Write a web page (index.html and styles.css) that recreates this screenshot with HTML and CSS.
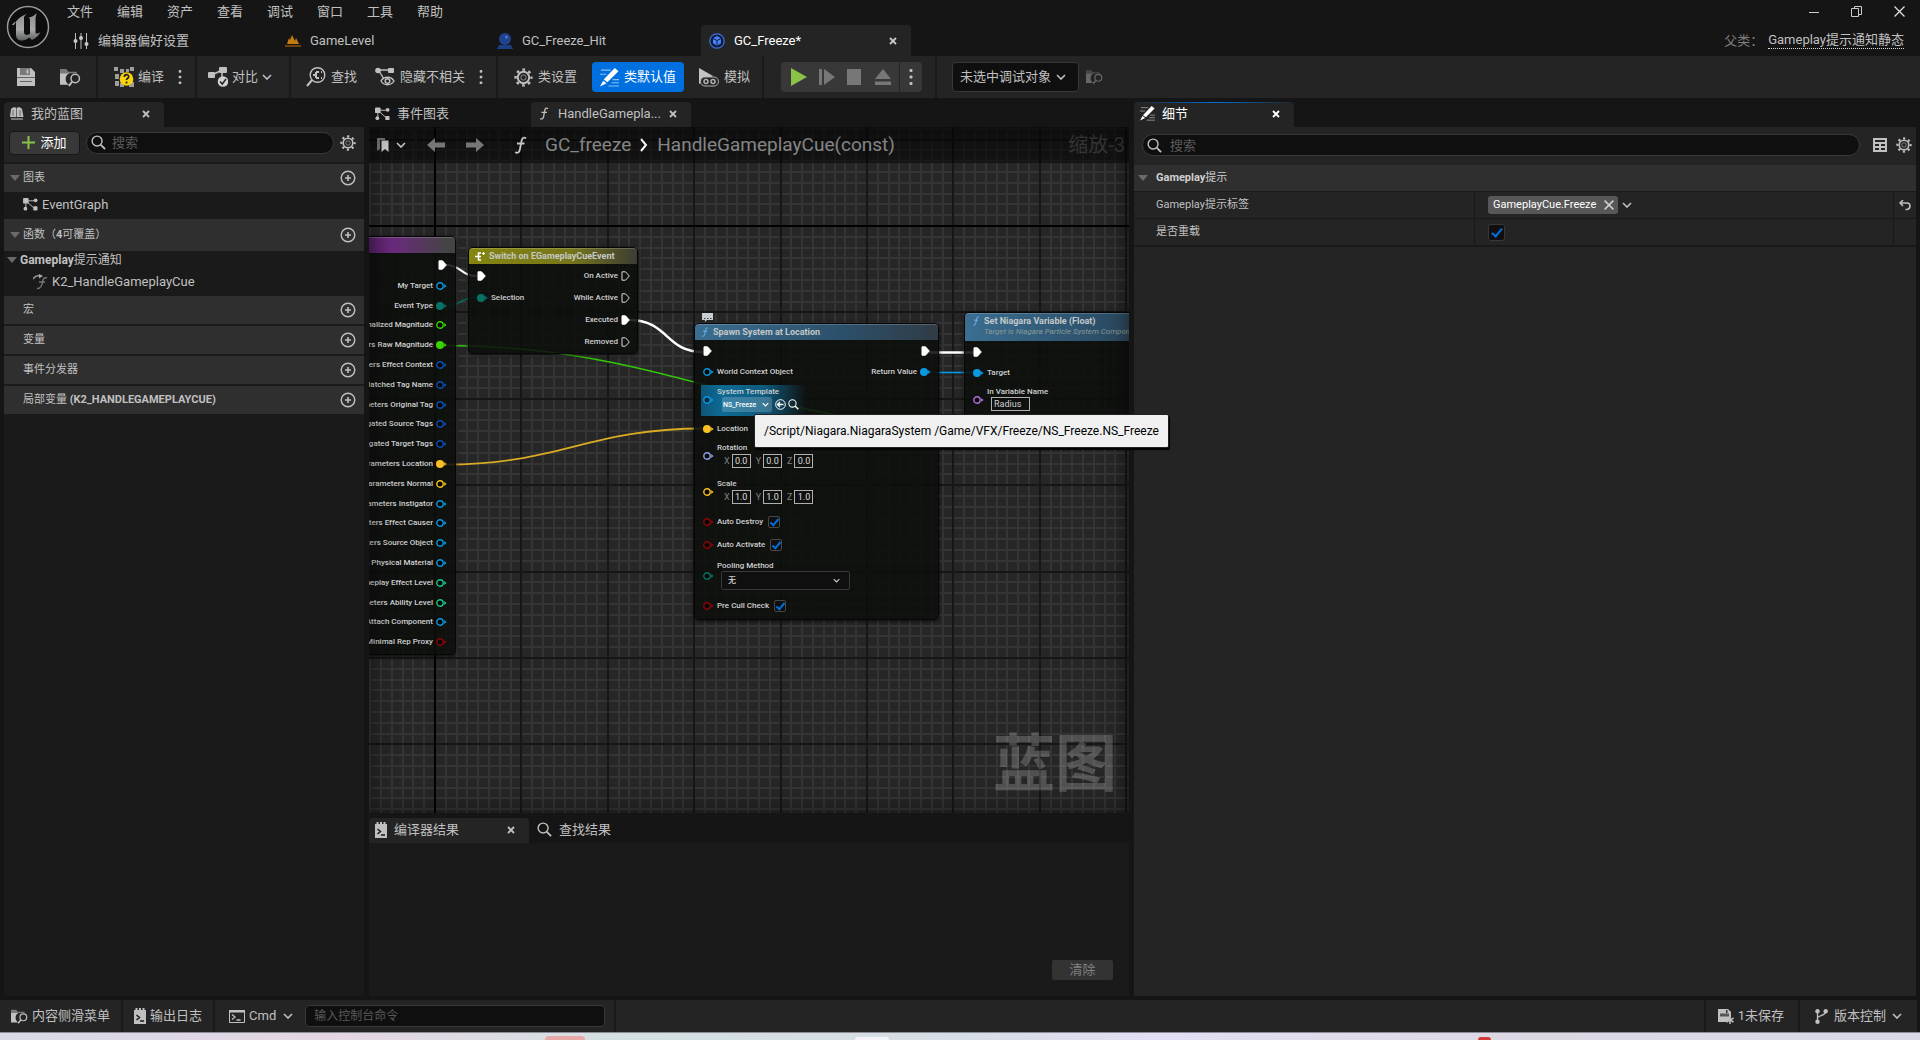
FILE: index.html
```html
<!DOCTYPE html>
<html lang="zh-CN">
<head>
    <meta charset="UTF-8">
    <meta name="viewport" content="width=device-width, initial-scale=1.0">
    <title>GC_Freeze</title>
    <link rel="stylesheet" href="styles.css">
</head>
<body>
    <!-- shared icons -->
    <svg class="defs" aria-hidden="true">
        <defs>
            <linearGradient id="metal" x1="0" y1="0" x2="0" y2="1"><stop offset="0" stop-color="#8f8f8f"/><stop offset=".6" stop-color="#a8a8a8"/><stop offset="1" stop-color="#5c6060"/></linearGradient>
            <symbol id="i-chevron" viewBox="0 0 10 6"><path d="M1 1l4 4 4-4" fill="none" stroke="currentColor" stroke-width="1.6"/></symbol>
            <symbol id="i-close" viewBox="0 0 8 8"><path d="M1 1l6 6M7 1L1 7" stroke="currentColor" stroke-width="1.8"/></symbol>
            <symbol id="i-search" viewBox="0 0 16 16"><circle cx="6.5" cy="6.5" r="5.3" fill="none" stroke="currentColor" stroke-width="1.5"/><path d="M10.5 10.5L15 15" stroke="currentColor" stroke-width="2"/></symbol>
            <symbol id="i-gear" viewBox="0 0 20 20"><g fill="none" stroke="currentColor"><circle cx="10" cy="10" r="6" stroke-width="2"/><circle cx="10" cy="10" r="2.8" stroke-width="1" opacity=".7"/><circle cx="10" cy="10" r="8.3" stroke-width="2.6" stroke-dasharray="2.8 3.72" stroke-dashoffset="1.4"/></g></symbol>
            <symbol id="i-plus" viewBox="0 0 16 16"><circle cx="8" cy="8" r="6.8" fill="none" stroke="currentColor" stroke-width="1.4"/><path d="M8 5v6M5 8h6" stroke="currentColor" stroke-width="1.6"/></symbol>
            <symbol id="i-tri" viewBox="0 0 10 6"><path d="M0 0h10L5 6z" fill="#6a6a6a"/></symbol>
            <symbol id="i-dots" viewBox="0 0 4 16"><g fill="currentColor"><rect x=".5" y="0" width="3" height="3" rx="1"/><rect x=".5" y="6.5" width="3" height="3" rx="1"/><rect x=".5" y="13" width="3" height="3" rx="1"/></g></symbol>
            <symbol id="i-save" viewBox="0 0 18 18"><path d="M0 0h14l4 4v14H0z" fill="currentColor"/><path d="M3 0h10v7H3z" fill="#242424" opacity=".45"/><path d="M9.500 1.500h2v4h-2z" fill="currentColor"/><path d="M0 9h18v1H0zM3 13h12v1H3z" fill="#242424" opacity=".6"/></symbol>
            <symbol id="i-folder" viewBox="0 0 20 18"><path d="M0 1h6l2 2.500h8v1.500H0z" fill="currentColor" opacity=".55"/><path d="M0 5h9a6 6 0 0 0 0 11H0z" fill="currentColor"/><circle cx="14.500" cy="10" r="4" fill="none" stroke="currentColor" stroke-width="1.400"/><path d="M11.500 13L8.500 17" stroke="currentColor" stroke-width="1.800"/></symbol>
            <symbol id="i-graph" viewBox="0 0 16 14"><path d="M3 3h9M3 3v9M4 4l8 7" stroke="currentColor" stroke-width="1"/><rect x="0" y="0" width="6" height="6" rx="1" fill="currentColor"/><circle cx="13.500" cy="2.500" r="2" fill="currentColor"/><rect x="11" y="9" width="4.500" height="4.500" rx="1" fill="currentColor"/><circle cx="2.500" cy="11.500" r="2" fill="currentColor"/></symbol>
            <symbol id="i-pencil" viewBox="0 0 18 18"><path d="M1 2h9M0 6h6M12 11h6M11 14h7M8 17h10" stroke="currentColor" stroke-width="1" opacity=".55"/><path d="M14 0l3.500 3L7 13.500 3.500 11zM3 12l3.200 2.500L0 17.500z" fill="currentColor"/></symbol>
            <symbol id="i-func" viewBox="0 0 12 18"><path d="M11.500 2.500C9.500.500 7.500 2 7 5L5.500 13C5 16 3 18 .8 16M2.500 7.500h7.500" fill="none" stroke="currentColor" stroke-width="1.800"/></symbol>
            <symbol id="i-log" viewBox="0 0 12 16"><path d="M0 2h1.500V0h2v2h1.500V0h2v2h1.500V0h2v2H12v14H0z" fill="currentColor"/><path d="M2.500 7l3 2.500-3 2.500M6 13h4" fill="none" stroke="#1a1a1a" stroke-width="1.500"/></symbol>
            <symbol id="i-back" viewBox="0 0 18 14"><path d="M0 7l8-7v4.500h10v5H8V14z" fill="currentColor"/></symbol>
            <!-- pins -->
            <symbol id="p-exec" viewBox="0 0 9 10"><path d="M1 .800h3.500L8.300 5 4.500 9.200H1z" fill="#fff" stroke="#fff"/></symbol>
            <symbol id="p-exec-o" viewBox="0 0 9 10"><path d="M1 .800h3.500L8.300 5 4.500 9.200H1z" fill="none" stroke="#d8d8d8"/></symbol>
            <symbol id="p-ring" viewBox="0 0 11 8"><circle cx="4" cy="4" r="3.200" fill="#0008" stroke="currentColor" stroke-width="1.400"/><path d="M8.200 2v4L10.600 4z" fill="currentColor"/></symbol>
            <symbol id="p-dot" viewBox="0 0 11 8"><circle cx="4" cy="4" r="4" fill="currentColor"/><path d="M8.200 2v4L10.600 4z" fill="currentColor"/></symbol>
        </defs>
    </svg>

    <header class="titlebar">
        <svg class="logo" viewBox="0 0 44 44"><circle cx="22" cy="22" r="20.500" fill="#0d0d0d" stroke="#9a9a9a" stroke-width="1.500"/><path d="M8 20c3-6 7-9 13-11-3 2-3 3-3 5v13c0 2 1 3 3 3l3-1V15c0-2-1-2-2-2 4-1 7-3 9-5-1 2-1.500 4-1.500 6v13c0 2 2 2 5 0-3 5-6 7-8.500 8l-3-2.500c-2 2-4 3-7 3-4 0-6-2-6-6V18c0-2-2-1-4 2z" fill="url(#metal)"/></svg>
        <div class="title-main">
            <div class="title-row">
                <nav class="menu">
                    <button>文件</button><button>编辑</button><button>资产</button><button>查看</button><button>调试</button><button>窗口</button><button>工具</button><button>帮助</button>
                </nav>
                <div class="win-buttons">
                    <button aria-label="最小化"><svg width="10" height="10"><path d="M0 5.500h10" stroke="#ccc"/></svg></button>
                    <button aria-label="还原"><svg width="11" height="11"><path d="M.5 2.500h7v8h-7zM3.500 2.500v-2h7v8h-3" fill="none" stroke="#ccc"/></svg></button>
                    <button aria-label="关闭"><svg width="11" height="11"><path d="M.5.500l10 10M10.500.500l-10 10" stroke="#ddd" stroke-width="1.300"/></svg></button>
                </div>
            </div>
            <div class="title-row doc-row">
                <div class="doc-tabs">
                    <div class="doc-tab"><svg width="16" height="16" viewBox="0 0 16 16"><g fill="none" stroke="#bdbdbd"><path d="M2.500 0v16M8 0v16M13.500 0v16"/></g><g fill="#c8c8c8"><circle cx="2.500" cy="8" r="2"/><circle cx="8" cy="5" r="2"/><circle cx="13.500" cy="11" r="2"/></g></svg><span>编辑器偏好设置</span></div>
                    <div class="doc-tab"><svg width="16" height="16" viewBox="0 0 16 16"><path d="M0 12h16v2H0z" fill="#6b4410"/><path d="M2 11l2-6 1 2 2-5 3 6 1-3 3 6z" fill="#c57d10"/></svg><span>GameLevel</span></div>
                    <div class="doc-tab"><svg width="16" height="16" viewBox="0 0 16 16"><path d="M2 12h12l2 4H0z" fill="#1e3f86"/><circle cx="8" cy="6" r="6" fill="#21438f"/><circle cx="9.500" cy="4" r="1.500" fill="#4c78d0"/></svg><span>GC_Freeze_Hit</span></div>
                    <div class="doc-tab active"><svg width="16" height="16" viewBox="0 0 16 16"><circle cx="8" cy="8" r="7.200" fill="#0c1c40" stroke="#3f73e0" stroke-width="1.200"/><path d="M8 3l4 2.200v5L8 12.800 4 10.200v-5z" fill="#4a82f5"/><path d="M4 5.500l4 2 4-2M8 7.500v5" stroke="#0c1c40" fill="none"/></svg><span>GC_Freeze*</span><button class="x" aria-label="关闭"><svg width="8" height="8"><use href="#i-close"/></svg></button></div>
                </div>
                <div class="parent-class"><span>父类：</span><a href="#">Gameplay提示通知静态</a></div>
            </div>
        </div>
    </header>

    <div class="toolbar">
        <div class="tool-group g-file">
            <button aria-label="保存"><svg width="18" height="18"><use href="#i-save"/></svg></button>
            <button aria-label="浏览"><svg width="21" height="19"><use href="#i-folder"/></svg></button>
        </div>
        <div class="tool-group g-compile">
            <button><svg width="20" height="20" viewBox="0 0 20 20"><g fill="#bdbdbd"><path d="M0 0h4v4H0zM6 2h4v4H6zM12 2h3v3h-3zM16 0h4v4h-4zM1 7h4v5H1zM1 14h4v5H1zM6 16h4v4H6zM15 15h5v5h-5z" opacity=".8"/></g><circle cx="12.500" cy="12" r="6.800" fill="#f7d40c"/><path d="M10.300 10c0-3 4.400-3 4.400-.3 0 1.600-2.200 1.600-2.200 3.300M12.500 14.500v2" stroke="#222" stroke-width="1.700" fill="none"/></svg><span>编译</span></button>
            <button class="dots" aria-label="编译选项"><svg width="4" height="14"><use href="#i-dots"/></svg></button>
        </div>
        <div class="tool-group g-diff">
            <button><svg width="20" height="20" viewBox="0 0 20 20"><path d="M4 8l8-4M14 5v5" stroke="#c0c0c0" stroke-width="1.500"/><rect y="5" width="7" height="6" rx="1" fill="#c0c0c0"/><rect x="11" y="0" width="8" height="6" rx="1" fill="#c0c0c0"/><circle cx="15" cy="14.500" r="5.300" fill="#d0d0d0"/><path d="M12 14.500l2.300 2.500 3.700-5" stroke="#222" stroke-width="1.500" fill="none"/></svg><span>对比</span><svg width="10" height="6"><use href="#i-chevron"/></svg></button>
        </div>
        <div class="tool-group g-find">
            <button><svg width="20" height="20" viewBox="0 0 20 20"><circle cx="11.500" cy="8" r="7.300" fill="none" stroke="#c0c0c0" stroke-width="1.400"/><path d="M6 13L1 19" stroke="#c0c0c0" stroke-width="2"/><path d="M7 8h3M10 5h3M10 11h3M10 5v6M15 5h1M15 11h1" stroke="#c0c0c0" stroke-width="2"/></svg><span>查找</span></button>
            <button><svg width="20" height="20" viewBox="0 0 20 20"><path d="M3 3h13M4 4l5 8" stroke="#c0c0c0" stroke-width="1.400"/><circle cx="3" cy="3.500" r="2.800" fill="#c0c0c0"/><rect x="13" y="1" width="6" height="5" rx="1" fill="#c0c0c0"/><path d="M6 14c3-5 10-5 13 0-3 5-10 5-13 0z" fill="#242424" stroke="#c0c0c0" stroke-width="1.400"/><circle cx="12.500" cy="14" r="2.300" fill="none" stroke="#c0c0c0" stroke-width="1.500"/></svg><span>隐藏不相关</span></button>
            <button class="dots" aria-label="隐藏选项"><svg width="4" height="14"><use href="#i-dots"/></svg></button>
        </div>
        <div class="tool-group g-class">
            <button><svg width="19" height="19"><use href="#i-gear"/></svg><span>类设置</span></button>
            <button class="primary"><svg width="19" height="19"><use href="#i-pencil"/></svg><span>类默认值</span></button>
            <button><svg width="20" height="20" viewBox="0 0 20 20"><path d="M0 1l14 8L0 17z" fill="#c4c4c4"/><rect x="1.500" y="10" width="18" height="9" rx="4.500" fill="#242424" stroke="#b0b0b0"/><circle cx="7" cy="14.500" r="2" fill="none" stroke="#b0b0b0" stroke-width="1.500"/><circle cx="14" cy="14.500" r="2" fill="none" stroke="#b0b0b0" stroke-width="1.500"/></svg><span>模拟</span></button>
        </div>
        <div class="tool-group g-play">
            <div class="play">
                <button aria-label="播放"><svg width="16" height="18"><path d="M0 0l16 9L0 18z" fill="#8bc34a"/></svg></button>
                <button aria-label="逐帧"><svg width="16" height="16"><path d="M0 0h3v16H0zM5 0l11 8L5 16z" fill="#777"/></svg></button>
                <button aria-label="停止"><svg width="14" height="16"><path d="M0 0h14v16H0z" fill="#777"/></svg></button>
                <button aria-label="弹出"><svg width="16" height="16"><path d="M8 0l8 10H0zM0 12.500h16V16H0z" fill="#777"/></svg></button>
                <button class="more" aria-label="播放选项"><svg width="4" height="16"><use href="#i-dots"/></svg></button>
            </div>
        </div>
        <div class="tool-group g-debug">
            <label class="select-wrap"><select aria-label="调试对象"><option>未选中调试对象</option></select><svg width="10" height="6"><use href="#i-chevron"/></svg></label>
            <button class="dim" aria-label="定位"><svg width="17" height="16"><use href="#i-folder"/></svg></button>
        </div>
    </div>

    <main class="workspace">
        <section class="blueprint">
            <div class="tabs"><div class="tab active"><svg width="14" height="13" viewBox="0 0 14 13"><path d="M1 2c2-2 4-2 5.500-1 1.500-1 4-1 5.500 1l1.500 8H0z" fill="#bdbdbd"/><path d="M6.500 1v9M3 3v6M10 3v6" stroke="#666"/><path d="M1 11h12v2H1z" fill="#777"/></svg><span>我的蓝图</span><button class="x" aria-label="关闭"><svg width="8" height="8"><use href="#i-close"/></svg></button></div></div>
            <div class="panel-tools">
                <button class="add"><svg width="13" height="13"><path d="M6.500 0v13M0 6.500h13" stroke="#8bc34a" stroke-width="2"/></svg>添加</button>
                <label class="search"><svg width="15" height="15"><use href="#i-search"/></svg><input type="text" placeholder="搜索"></label>
                <button class="icon" aria-label="设置"><svg width="16" height="16"><use href="#i-gear"/></svg></button>
            </div>
            <div class="sections">
                <div class="section open"><svg class="tri" width="10" height="6"><use href="#i-tri"/></svg><span>图表</span><button class="icon" aria-label="添加图表"><svg width="16" height="16"><use href="#i-plus"/></svg></button></div>
                <div class="item"><svg width="15" height="13"><use href="#i-graph"/></svg><span>EventGraph</span></div>
                <div class="section open tall"><svg class="tri" width="10" height="6"><use href="#i-tri"/></svg><span>函数（<b>4</b>可覆盖）</span><button class="icon" aria-label="添加函数"><svg width="16" height="16"><use href="#i-plus"/></svg></button></div>
                <div class="sub"><svg width="10" height="6"><use href="#i-tri"/></svg><span><b>Gameplay</b>提示通知</span></div>
                <div class="item func"><svg width="15" height="16" viewBox="0 0 15 16"><path d="M0 5c2-3 4-3.500 7-3.500" fill="none" stroke="#999" stroke-width="1.500"/><path d="M6 0l4 2-4 2.500z" fill="#aaa"/><path d="M14 4c-3-1-4 1-4.500 4S8 15 4 14.500M6 8h6" fill="none" stroke="#777" stroke-width="1.400"/></svg><span>K2_HandleGameplayCue</span></div>
                <div class="section"><span>宏</span><button class="icon" aria-label="添加宏"><svg width="16" height="16"><use href="#i-plus"/></svg></button></div>
                <div class="section"><span>变量</span><button class="icon" aria-label="添加变量"><svg width="16" height="16"><use href="#i-plus"/></svg></button></div>
                <div class="section"><span>事件分发器</span><button class="icon" aria-label="添加分发器"><svg width="16" height="16"><use href="#i-plus"/></svg></button></div>
                <div class="section"><span>局部变量 <b>(K2_HANDLEGAMEPLAYCUE)</b></span><button class="icon" aria-label="添加局部变量"><svg width="16" height="16"><use href="#i-plus"/></svg></button></div>
            </div>
        </section>

        <section class="center">
            <div class="tabs">
                <div class="tab"><svg width="15" height="14"><use href="#i-graph"/></svg><span>事件图表</span></div>
                <div class="tab active"><svg width="14" height="13"><use href="#i-func"/></svg><span>HandleGamepla...</span><button class="x" aria-label="关闭"><svg width="8" height="8"><use href="#i-close"/></svg></button></div>
            </div>
            <div class="graph" id="graph">
                <svg class="layer" id="grid"></svg>
                <div class="watermark">蓝图</div>
                <svg class="layer wires">
                    <path d="M77 138C92 138 92 149 108 149" stroke="#fff" stroke-width="2"/>
                    <path d="M77 179C92 179 92 170 108 170" stroke="#067265" stroke-width="1.500"/>
                    <path d="M77 218.500C190 219 272 241 325 255S430 282 480 290" stroke="#32c80a" stroke-width="1.500"/>
                    <path d="M260 193C300 193 296 225 334 225" stroke="#fff" stroke-width="2.500"/>
                    <path d="M77 337.500C190 337.500 220 301.500 334 301.500" stroke="#d9aa24" stroke-width="1.800"/>
                    <path d="M560 225.500h45" stroke="#fff" stroke-width="2.500"/>
                    <path d="M566 245.500h38" stroke="#00a0f0" stroke-width="1.500"/>
                </svg>

                <div class="node n-event">
                    <div class="node-head purple"></div>
                    <div class="exec-line"><svg width="9" height="10"><use href="#p-exec"/></svg></div>
                    <div class="params">
                        <div class="pin-row blue">My Target<svg class="pin"><use href="#p-ring"/></svg></div>
                        <div class="pin-row teal">Event Type<svg class="pin"><use href="#p-dot"/></svg></div>
                        <div class="pin-row green">Parameters Normalized Magnitude<svg class="pin"><use href="#p-ring"/></svg></div>
                        <div class="pin-row green">Parameters Raw Magnitude<svg class="pin"><use href="#p-dot"/></svg></div>
                        <div class="pin-row navy">Parameters Effect Context<svg class="pin"><use href="#p-ring"/></svg></div>
                        <div class="pin-row navy">Parameters Matched Tag Name<svg class="pin"><use href="#p-ring"/></svg></div>
                        <div class="pin-row navy">Parameters Original Tag<svg class="pin"><use href="#p-ring"/></svg></div>
                        <div class="pin-row navy">Parameters Aggregated Source Tags<svg class="pin"><use href="#p-ring"/></svg></div>
                        <div class="pin-row navy">Parameters Aggregated Target Tags<svg class="pin"><use href="#p-ring"/></svg></div>
                        <div class="pin-row gold">Parameters Location<svg class="pin"><use href="#p-dot"/></svg></div>
                        <div class="pin-row gold">Parameters Normal<svg class="pin"><use href="#p-ring"/></svg></div>
                        <div class="pin-row blue">Parameters Instigator<svg class="pin"><use href="#p-ring"/></svg></div>
                        <div class="pin-row blue">Parameters Effect Causer<svg class="pin"><use href="#p-ring"/></svg></div>
                        <div class="pin-row blue">Parameters Source Object<svg class="pin"><use href="#p-ring"/></svg></div>
                        <div class="pin-row blue">Parameters Physical Material<svg class="pin"><use href="#p-ring"/></svg></div>
                        <div class="pin-row mint">Parameters Gameplay Effect Level<svg class="pin"><use href="#p-ring"/></svg></div>
                        <div class="pin-row mint">Parameters Ability Level<svg class="pin"><use href="#p-ring"/></svg></div>
                        <div class="pin-row blue">Parameters Target Attach Component<svg class="pin"><use href="#p-ring"/></svg></div>
                        <div class="pin-row red">Parameters Minimal Rep Proxy<svg class="pin"><use href="#p-ring"/></svg></div>
                    </div>
                </div>

                <div class="node n-switch">
                    <div class="node-head olive"><svg width="10" height="9" viewBox="0 0 10 9"><path d="M0 4.500h6M6 1H3.500v7H6" fill="none" stroke="#fff" stroke-width="1.500"/><path d="M8.500 0v3M7 1.500h3" stroke="#fff"/></svg>Switch on EGameplayCueEvent</div>
                    <div class="cols">
                        <div class="col">
                            <div class="line"><svg width="9" height="10"><use href="#p-exec"/></svg></div>
                            <div class="line teal"><svg class="pin"><use href="#p-dot"/></svg>Selection</div>
                        </div>
                        <div class="col right">
                            <div class="line">On Active<svg width="9" height="10"><use href="#p-exec-o"/></svg></div>
                            <div class="line">While Active<svg width="9" height="10"><use href="#p-exec-o"/></svg></div>
                            <div class="line">Executed<svg width="9" height="10"><use href="#p-exec"/></svg></div>
                            <div class="line">Removed<svg width="9" height="10"><use href="#p-exec-o"/></svg></div>
                        </div>
                    </div>
                </div>

                <svg class="bubble" viewBox="0 0 11 9"><path d="M0 0h11v7H5L3 9V7H0z" fill="#c9ccd0"/><path d="M2 5.500h1.500M5 5.500h1.500M8 5.500h1.500" stroke="#444"/></svg>
                <div class="node n-spawn">
                    <div class="node-head steel"><svg class="fn" width="8" height="10"><use href="#i-func"/></svg>Spawn System at Location</div>
                    <div class="line split"><svg width="9" height="10"><use href="#p-exec"/></svg><svg width="9" height="10"><use href="#p-exec"/></svg></div>
                    <div class="line blue"><svg class="pin"><use href="#p-ring"/></svg>World Context Object<span class="out">Return Value<svg class="pin"><use href="#p-dot"/></svg></span></div>
                    <div class="template blue">
                        <svg class="pin"><use href="#p-ring"/></svg>
                        <div class="stack">
                            <span>System Template</span>
                            <div class="asset">
                                <button>NS_Freeze<svg width="7" height="5"><use href="#i-chevron"/></svg></button>
                                <svg width="11" height="11" viewBox="0 0 11 11"><circle cx="5.500" cy="5.500" r="4.800" fill="none" stroke="#fff"/><path d="M2.500 5.500h6M5 3L2.500 5.500 5 8" fill="none" stroke="#fff" stroke-width="1.300"/></svg>
                                <svg width="11" height="11"><use href="#i-search"/></svg>
                            </div>
                        </div>
                    </div>
                    <div class="line gold"><svg class="pin"><use href="#p-dot"/></svg>Location</div>
                    <div class="vec lilac"><svg class="pin"><use href="#p-ring"/></svg><div class="stack"><span>Rotation</span><div class="fields"><label>X<input value="0.0"></label><label>Y<input value="0.0"></label><label>Z<input value="0.0"></label></div></div></div>
                    <div class="vec gold"><svg class="pin"><use href="#p-ring"/></svg><div class="stack"><span>Scale</span><div class="fields"><label>X<input value="1.0"></label><label>Y<input value="1.0"></label><label>Z<input value="1.0"></label></div></div></div>
                    <label class="line flag red"><svg class="pin"><use href="#p-ring"/></svg>Auto Destroy<input type="checkbox" class="check" checked></label>
                    <label class="line flag red"><svg class="pin"><use href="#p-ring"/></svg>Auto Activate<input type="checkbox" class="check" checked></label>
                    <div class="vec pooling teal"><svg class="pin"><use href="#p-ring"/></svg><div class="stack"><label for="pool">Pooling Method</label><div class="pool-wrap"><select id="pool"><option>无</option></select><svg width="7" height="5"><use href="#i-chevron"/></svg></div></div></div>
                    <label class="line flag red"><svg class="pin"><use href="#p-ring"/></svg>Pre Cull Check<input type="checkbox" class="check" checked></label>
                </div>

                <div class="node n-set">
                    <div class="node-head steel double"><svg class="fn" width="8" height="10"><use href="#i-func"/></svg><div>Set Niagara Variable (Float)<em>Target is Niagara Particle System Component</em></div></div>
                    <div class="line"><svg width="9" height="10"><use href="#p-exec"/></svg></div>
                    <div class="line blue"><svg class="pin"><use href="#p-dot"/></svg>Target</div>
                    <div class="vec var violet"><svg class="pin"><use href="#p-ring"/></svg><div class="stack"><label for="varname">In Variable Name</label><input id="varname" value="Radius"></div></div>
                </div>

                <div class="crumbs">
                    <button aria-label="书签"><svg width="14" height="14" viewBox="0 0 14 14"><path d="M0 0h8v2H3v9l-3 2z" fill="#777"/><path d="M4.500 2.500h7V14L8 11l-3.500 3z" fill="#ccc"/></svg><svg width="10" height="6"><use href="#i-chevron"/></svg></button>
                    <div class="arrows">
                        <button aria-label="后退"><svg width="18" height="14"><use href="#i-back"/></svg></button>
                        <button class="fwd" aria-label="前进"><svg width="18" height="14"><use href="#i-back"/></svg></button>
                    </div>
                    <svg class="crumb-f" width="15" height="18"><use href="#i-func"/></svg>
                    <span class="crumb">GC_freeze</span>
                    <svg class="sep" width="8" height="14"><path d="M1 1l5 6-5 6" fill="none" stroke="#fff" stroke-width="2"/></svg>
                    <span class="crumb">HandleGameplayCue(const)</span>
                    <span class="zoom">缩放-3</span>
                </div>
            </div>
            <div class="tooltip" role="tooltip">/Script/Niagara.NiagaraSystem /Game/VFX/Freeze/NS_Freeze.NS_Freeze</div>
            <div class="tabs results-tabs">
                <div class="tab active"><svg width="12" height="16"><use href="#i-log"/></svg><span>编译器结果</span><button class="x" aria-label="关闭"><svg width="8" height="8"><use href="#i-close"/></svg></button></div>
                <div class="tab"><svg width="15" height="15"><use href="#i-search"/></svg><span>查找结果</span></div>
            </div>
            <div class="results"><button class="clear">清除</button></div>
        </section>

        <section class="details">
            <div class="tabs"><div class="tab active focus"><svg width="15" height="15"><use href="#i-pencil"/></svg><span>细节</span><button class="x" aria-label="关闭"><svg width="8" height="8"><use href="#i-close"/></svg></button></div></div>
            <div class="details-body">
                <div class="panel-tools">
                    <label class="search"><svg width="15" height="15"><use href="#i-search"/></svg><input type="text" placeholder="搜索"></label>
                    <button class="icon" aria-label="列表"><svg width="14" height="14"><path d="M0 0h14v14H0z" fill="#c0c0c0"/><path d="M2 2h10v2H2zM2 6h4v2H2zM8 6h4v2H8zM2 10h4v2H2zM8 10h4v2H8z" fill="#242424"/></svg></button>
                    <button class="icon" aria-label="设置"><svg width="16" height="16"><use href="#i-gear"/></svg></button>
                </div>
                <div class="category"><svg width="10" height="6"><use href="#i-tri"/></svg><b>Gameplay</b>提示</div>
                <div class="prop">
                    <div class="name">Gameplay提示标签</div>
                    <div class="value"><span class="chip">GameplayCue.Freeze<button aria-label="移除"><svg width="10" height="10" viewBox="0 0 8 8"><path d="M.5.500l7 7M7.500.500l-7 7" stroke="#d0d0d0" stroke-width="1.200"/></svg></button></span><svg width="10" height="6"><use href="#i-chevron"/></svg></div>
                    <div class="reset"><svg width="12" height="11" viewBox="0 0 12 11"><path d="M4 0L1 3l3 3M1 3h7c4 0 4 6 0 6.500H6.500" fill="none" stroke="#c0c0c0" stroke-width="1.500"/></svg></div>
                </div>
                <div class="prop">
                    <label class="name" for="override">是否重载</label>
                    <div class="value"><input type="checkbox" id="override" class="check big" checked></div>
                    <div class="reset"></div>
                </div>
            </div>
        </section>
    </main>

    <footer class="status">
        <button><svg width="17" height="17"><use href="#i-folder"/></svg>内容侧滑菜单</button>
        <button><svg width="12" height="16"><use href="#i-log"/></svg>输出日志</button>
        <div class="console">
            <button><svg width="16" height="13"><path d="M.5.500h15v12H.5z" fill="none" stroke="#c0c0c0"/><path d="M0 0h16v2.500H0z" fill="#c0c0c0"/><path d="M3 4.500l3 2.500-3 2.500M7.500 10h4" fill="none" stroke="#c0c0c0" stroke-width="1.300"/></svg>Cmd<svg class="chev" width="10" height="6"><use href="#i-chevron"/></svg></button>
            <input type="text" placeholder="输入控制台命令" aria-label="控制台">
        </div>
        <div class="spacer"></div>
        <button class="unsaved"><svg width="16" height="15" viewBox="0 0 16 15"><path d="M0 0h10l3 3v5l-4 5H0z" fill="#c0c0c0"/><path d="M2 4.500h9v3H2z" fill="#555"/><path d="M8 1h1.500v3H8z" fill="#333"/><path d="M12 7v8M8.500 9l7 4M15.500 9l-7 4" stroke="#c0c0c0" stroke-width="1.500"/></svg>1未保存</button>
        <button class="source"><svg width="13" height="15" viewBox="0 0 13 15"><path d="M2.500 2v11M11 2c0 5-8 4-8.500 7" fill="none" stroke="#c0c0c0" stroke-width="1.300"/><g fill="#c0c0c0"><circle cx="2.500" cy="2.300" r="2.200"/><circle cx="10.700" cy="2.300" r="2.200"/><circle cx="2.500" cy="12.700" r="2.200"/></g></svg>版本控制<svg width="10" height="6"><use href="#i-chevron"/></svg></button>
    </footer>
    <div class="desktop"><i class="peek rose"></i><i class="peek white"></i><i class="peek dot"></i></div>

    <script src="script.js"></script>
</body>
</html>
```
FILE: styles.css
```css
* { box-sizing: border-box; }
body { margin: 0; height: 100vh; display: flex; flex-direction: column; overflow: hidden; background: #151515; color: #c0c0c0; font: 13px/16px Roboto, "Noto Sans CJK SC", sans-serif; text-spacing-trim: space-all; }
button { background: none; border: none; padding: 0; color: inherit; font: inherit; display: flex; align-items: center; cursor: pointer; }
input, select { font: inherit; color: inherit; min-width: 0; }
svg { flex: none; display: block; }
b { font-weight: 700; }
.defs { position: absolute; width: 0; height: 0; }

/* title bar */
.titlebar { display: flex; height: 56px; padding-left: 6px; }
.logo { width: 44px; height: 44px; margin-top: 5px; }
.title-main { flex: 1; margin-left: 15px; }
.title-row { display: flex; justify-content: space-between; height: 25px; padding-bottom: 2px; align-items: center; }
.menu { display: flex; gap: 24px; padding-left: 2px; }
.win-buttons { display: flex; gap: 32px; padding-right: 15px; }
.doc-row { height: 31px; padding-bottom: 0; align-items: stretch; }
.doc-tabs { display: flex; gap: 2px; }
.doc-tab { width: 210px; display: flex; align-items: center; gap: 9px; padding: 0 14px 0 8px; border-radius: 4px 4px 0 0; }
.doc-tab.active { background: #242424; color: #fff; }
.x { margin-left: auto; color: #c8c8c8; }
.parent-class { display: flex; align-items: center; gap: 5px; padding-right: 16px; color: #808080; }
.parent-class a { color: #c0c0c0; text-decoration: none; border-bottom: 1px dotted #ddd; }

/* toolbar */
.toolbar { display: flex; height: 42px; background: #242424; align-items: stretch; }
.tool-group { display: flex; align-items: center; gap: 14px; padding: 0 13px 0 16px; border-right: 2px solid #191919; }
.tool-group button { gap: 4px; height: 30px; }
.tool-group .dots { width: 6px; }
.g-file { gap: 25px; padding: 0 15px 0 17px; }
.g-compile { padding-right: 11px; }
.g-diff { padding: 0 17px 0 11px; }
.g-find { gap: 18px; padding: 0 11px 0 15px; }
.g-find button { gap: 5px; }
.g-find .dots { margin-left: -4px; }
.g-class { gap: 15px; padding: 0 12px 0 16px; }
.g-class button { gap: 5px; }
.tool-group .primary { background: #0070e0; color: #fff; border-radius: 4px; padding: 0 8px; }
.g-play { padding: 0 13px 0 17px; }
.play { display: flex; height: 30px; background: #383838; border-radius: 4px; padding-left: 10px; }
.play button { width: 28px; }
.tool-group .more { width: 23px; margin-left: -4px; border-left: 1px solid #242424; justify-content: center; }
.g-debug { border: none; padding-left: 15px; gap: 7px; }
.select-wrap { display: flex; align-items: center; background: #0f0f0f; border: 1px solid #383838; border-radius: 4px; height: 30px; width: 127px; position: relative; }
.select-wrap select { appearance: none; border: none; background: none; padding: 0 0 0 7px; width: 100%; height: 100%; }
.select-wrap svg { position: absolute; right: 12px; pointer-events: none; }
.dim { color: #666; }

/* panels */
.workspace { flex: 1; min-height: 0; display: flex; gap: 5px; padding: 4px; }
.blueprint { width: 360px; display: flex; flex-direction: column; }
.center { flex: 760 1 0; min-width: 0; display: flex; flex-direction: column; position: relative; }
.details { flex: 782 1 0; min-width: 0; display: flex; flex-direction: column; }
.tabs { display: flex; height: 25px; flex: none; }
.tab { width: 160px; display: flex; align-items: center; gap: 7px; padding: 0 14px 2px 6px; margin-right: 2px; }
.tab.active { background: #242424; border-radius: 4px 4px 0 0; }
.tab svg { color: #c0c0c0; }
.tab.focus { color: #fff; background: linear-gradient(90deg, #242424, #0070e0, #242424) top / 100% 1px no-repeat #242424; }
.tab.focus svg { color: #fff; }
.panel-tools { display: flex; align-items: center; background: #242424; }
.search { flex: 1; display: flex; align-items: center; gap: 6px; height: 22px; padding-left: 4px; background: #0f0f0f; border: 1px solid #383838; border-radius: 11px; }
.search input { flex: 1; background: none; border: none; outline: none; padding: 0; height: 18px; }
.search input::placeholder, .console input::placeholder { color: #5a5a5a; opacity: 1; }
.blueprint .panel-tools { height: 35px; padding: 0 8px 4px 5px; gap: 6px; }
.add { width: 71px; height: 24px; gap: 5px; justify-content: center; color: #fff; background: #383838; border: 1px solid #161616; border-radius: 4px; }
.sections { flex: 1; background: #1a1a1a; padding-top: 2px; }
.section { display: flex; align-items: center; height: 28px; padding: 0 8px 0 19px; margin-bottom: 2px; background: #2f2f2f; font-size: 11px; position: relative; }
.section .icon { margin-left: auto; }
.section .tri { position: absolute; left: 6px; }
.section.open { margin-bottom: 0; }
.section.tall { height: 32px; }
.item { display: flex; align-items: center; gap: 4px; height: 27px; padding: 0 0 2px 19px; }
.sub { display: flex; align-items: center; gap: 3px; height: 17px; padding-left: 3px; font-size: 12px; }
.item.func { height: 28px; padding: 0 0 0 29px; }

/* results */
.results-tabs { margin-top: 5px; }
.results { height: 153px; background: #1a1a1a; display: flex; justify-content: flex-end; align-items: flex-end; padding: 16px; }
.clear { width: 61px; height: 20px; justify-content: center; background: #333; color: #808080; border-radius: 2px; }

/* details */
.details-body { flex: 1; background: #242424; }
.details .panel-tools { height: 38px; padding: 0 4px 2px 8px; }
.details .search { gap: 8px; margin-right: 13px; }
.details .panel-tools .icon + .icon { margin-left: 9px; }
.category { display: flex; align-items: center; height: 26px; background: #2f2f2f; padding-left: 4px; font-size: 11px; color: #d0d0d0; }
.category svg { margin-right: 8px; }
.prop { display: flex; height: 27px; border-top: 1px solid #191919; font-size: 11px; }
.prop:last-child { height: 29px; border-bottom: 2px solid #191919; }
.name { flex: 0 0 341px; padding-left: 22px; line-height: 25px; border-right: 1px solid #191919; }
.value { flex: 1; display: flex; align-items: center; gap: 4px; padding-left: 13px; }
.chip { display: flex; align-items: center; gap: 8px; height: 18px; padding: 0 4px 0 5px; background: #575757; color: #fff; border-radius: 3px; }
.reset { width: 23px; display: flex; align-items: center; justify-content: center; border-left: 1px solid #191919; }
.check { appearance: none; flex: none; margin: 0; width: 12px; height: 12px; background: #0f0f0f; border: 1px solid #484848; border-radius: 2px; position: relative; }
.check:checked::after { content: ""; position: absolute; left: 3px; top: 0; width: 5px; height: 9px; border: solid #0070e0; border-width: 0 2px 2px 0; transform: rotate(40deg); box-sizing: border-box; }
.check.big { width: 17px; height: 17px; border-color: #383838; border-radius: 3px; }
.check.big:checked::after { left: 5px; top: 1px; width: 6px; height: 11px; }

/* graph canvas */
.graph { flex: 1; min-height: 0; position: relative; overflow: hidden; background: #262626; font-size: 8px; font-weight: 500; line-height: 10px; color: #d0d0d0; }
.layer { position: absolute; left: 0; top: 0; width: 100%; height: 100%; }
.wires path { fill: none; }
.graph::after { content: ""; position: absolute; inset: 0; box-shadow: inset 0 0 24px rgba(0, 0, 0, .5); pointer-events: none; }
.minor { fill: #343434; }
.major { fill: #161616; }
.axis { fill: #000; }
.watermark { position: absolute; right: 12px; bottom: 10px; font-size: 62px; line-height: 76px; font-weight: 700; color: rgba(255, 255, 255, .2); }
.crumbs { position: absolute; left: 0; right: 0; top: 0; height: 36px; display: flex; align-items: center; background: rgba(5, 5, 5, .6); color: #8a8a8a; font-size: 19px; line-height: 24px; font-weight: 400; padding-left: 8px; }
.crumbs > button { gap: 5px; color: #ccc; }
.arrows { display: flex; gap: 21px; margin-left: 9px; padding: 10px 13px 10px 10px; border: solid #161616; border-width: 0 2px; color: #7b7b7b; }
.fwd svg { transform: scaleX(-1); }
.crumb-f { margin: 0 17px 0 14px; color: #ccc; }
.sep { margin: 0 9px; }
.zoom { margin-left: auto; padding-right: 4px; font-size: 20px; color: #363636; }
.tooltip { position: absolute; left: 386px; top: 313px; z-index: 2; height: 32px; padding: 0 9px; background: #f0f0f0; color: #000; border-radius: 1px; box-shadow: 0 0 0 1px #222, 1px 2px 1px 1px #000; font-size: 12px; line-height: 32px; white-space: nowrap; }

.node { position: absolute; background: rgba(12, 15, 12, .88); border: 1px solid #060606; border-radius: 5px; box-shadow: 0 1px 4px rgba(0, 0, 0, .7); }
.node-head { display: flex; align-items: center; height: 16px; padding: 0 0 1px 6px; gap: 4px; border-top: 1px solid #ffffff30; border-radius: 4px 4px 0 0; font-size: 9px; font-weight: 700; color: #c4c8c8; white-space: nowrap; }
.purple { background: linear-gradient(90deg, #4c1a58 60%, #6a2a7c 75%, #444 97%); }
.olive { background: linear-gradient(90deg, #85850f, #77771a 60%, #3c3c34); }
.steel { background: linear-gradient(90deg, #3b6e91, #2c506a 60%, #303c46); }
.fn { color: #6cb6ee; }
.pin { width: 11px; height: 8px; }
.blue svg.pin { color: #0a98e0; }
.teal svg.pin { color: #067265; }
.green svg.pin { color: #38d400; }
.navy svg.pin { color: #0a50b4; }
.gold svg.pin { color: #f8c020; }
.mint svg.pin { color: #1ec48c; }
.red svg.pin { color: #8c0606; }
.lilac svg.pin { color: #8fa2e6; }
.violet svg.pin { color: #b070e0; }
.line { display: flex; align-items: center; height: 21px; gap: 3px; padding-left: 8px; }

.n-event { right: calc(100% - 87px); top: 109px; width: 250px; height: 419px; }
.exec-line { display: flex; justify-content: flex-end; height: 23px; align-items: center; padding-right: 8px; }
.params { display: flex; flex-direction: column; height: 376px; padding-right: 8px; }
.pin-row { flex: 1; display: flex; align-items: center; justify-content: flex-end; gap: 3px; white-space: nowrap; }

.n-switch { left: 99px; top: 120px; width: 170px; height: 107px; }
.cols { display: flex; justify-content: space-between; padding-top: 1px; }
.cols .line { height: 22px; }
.right .line { justify-content: flex-end; padding: 0 7px 0 0; }

.bubble { position: absolute; left: 333px; top: 186px; width: 11px; height: 9px; }
.n-spawn { left: 325px; top: 196px; width: 245px; padding-bottom: 1px; }
.n-spawn > .split { justify-content: space-between; padding-right: 8px; }
.out { display: flex; align-items: center; gap: 3px; margin-left: auto; padding-right: 7px; }
.template { display: flex; align-items: center; gap: 3px; width: 105px; height: 31px; margin: 3px 0 2px 6px; padding: 0 0 2px 2px; background: linear-gradient(90deg, #0d5579, #0e6a94 20%, #0e5b80 60%, transparent); }
.stack { display: flex; flex-direction: column; }
.asset { display: flex; align-items: center; gap: 2px; padding-left: 5px; color: #fff; }
.asset button { width: 50px; height: 15px; padding-left: 1px; gap: 6px; background: #ffffff30; font-size: 7px; border-radius: 2px; margin-right: 1px; line-height: 10px; }
.vec { display: flex; height: 36px; gap: 3px; padding: 4px 0 0 8px; }
.vec > .pin { margin-top: 9px; }
.fields { display: flex; gap: 5px; padding: 1px 0 0 7px; }
.fields label { display: flex; align-items: center; gap: 2px; font-size: 9px; font-weight: 400; color: #808080; }
.fields input { width: 19px; height: 14px; padding: 0; text-align: center; background: none; border: 1px solid #b0b0b0; color: #ddd; }
.flag { height: 23px; padding-bottom: 1px; }
.flag .check { margin-left: 2px; }
.pooling { height: 38px; }
.pooling > .pin { margin-top: 11px; }
.pool-wrap { position: relative; margin-left: 4px; }
.pool-wrap select { display: block; appearance: none; width: 129px; height: 19px; padding: 0 6px; background: #0f0f0f; border: 1px solid #383838; border-radius: 2px; font-size: 8px; }
.pool-wrap svg { position: absolute; right: 10px; top: 7px; pointer-events: none; }

.n-set { left: 595px; top: 185px; width: 220px; height: 116px; }
.double { height: 28px; padding-left: 7px; align-items: flex-start; padding-top: 2px; }
.double em { display: block; font-size: 8px; font-weight: 400; color: #8a9a96; line-height: 12px; }
.var input { width: 39px; height: 14px; margin-left: 4px; padding: 0 2px; background: none; border: 1px solid #b0b0b0; font-size: 9px; font-weight: 400; }

/* status bar */
.status { display: flex; height: 32px; background: #242424; margin-right: 3px; }
.status > button, .console { display: flex; align-items: center; gap: 4px; padding: 0 11px; border-right: 2px solid #191919; }
.console { padding: 0 9px 0 14px; gap: 12px; }
.console button { gap: 4px; }
.console .chev { margin-left: 3px; }
.console input { width: 300px; height: 22px; padding: 0 8px; background: #0f0f0f; border: 1px solid #383838; border-radius: 4px; font-size: 12px; }
.spacer { flex: 1; }
.status > .unsaved { border-left: 2px solid #191919; padding: 0 14px 0 12px; }
.status > .source { border: none; padding: 0 15px; gap: 6px; }
.desktop { position: relative; height: 8px; background: linear-gradient(90deg, #d8dae6, #e4d6e2 18%, #d4e0e2 32%, #d6dde4 50%, #e2def4 60%, #dcd8e2 80%, #d8dae8); border-top: 1px solid #8c8c98; }
.peek { position: absolute; bottom: 0; height: 4px; border-radius: 4px 4px 0 0; }
.rose { left: 545px; width: 40px; background: #e8a9a9; }
.white { left: 855px; width: 34px; height: 3px; background: #f4f4fa; }
.dot { left: 1478px; width: 13px; height: 3px; background: #d33b3b; }
```
FILE: script.js
```js
// background grid: a major line every 8 minor ones, axes at the origin
function drawGrid() {
    const graph = document.getElementById("graph");
    const step = 10.8, originX = 65, originY = 98;
    const w = graph.clientWidth, h = graph.clientHeight;
    let minor = "", major = "", axis = "";

    const line = (i, vertical) => {
        const pos = Math.round((vertical ? originX : originY) + i * step);
        const rect = vertical
            ? `<rect x="${pos}" y="0" width="2" height="${h}"`
            : `<rect x="0" y="${pos}" width="${w}" height="2"`;
        if (i === 0) axis += rect + ' class="axis"/>';
        else if (i % 8 === 0) major += rect + ' class="major"/>';
        else minor += rect + ' class="minor"/>';
    };

    for (let i = -Math.floor(originX / step); originX + i * step < w; i++) line(i, true);
    for (let i = -Math.floor(originY / step); originY + i * step < h; i++) line(i, false);
    document.getElementById("grid").innerHTML = minor + major + axis;
}

drawGrid();
window.addEventListener("resize", drawGrid);
```
